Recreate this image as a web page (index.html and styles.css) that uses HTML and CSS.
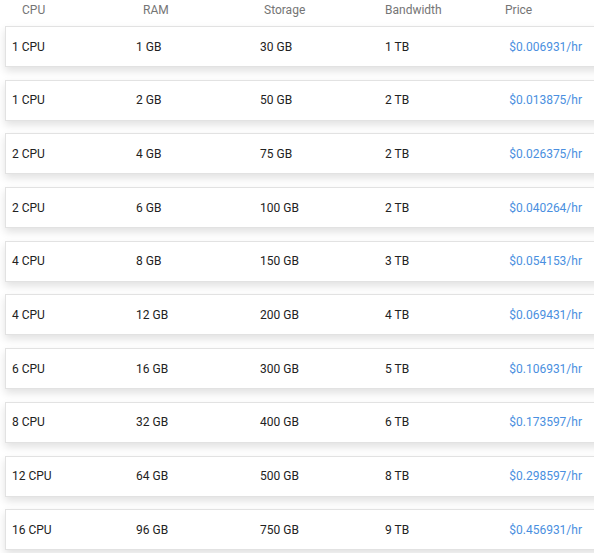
FILE: index.html
```html
<!DOCTYPE html>
<html>
<head>
<meta charset="utf-8">
<link rel="stylesheet" href="styles.css">
</head>
<body>
<div class="plans">
  <div class="head">
    <span>CPU</span><span>RAM</span><span>Storage</span><span>Bandwidth</span><span>Price</span>
  </div>
  <div class="row"><span>1 CPU</span><span>1 GB</span><span>30 GB</span><span>1 TB</span><span class="price">$0.006931/hr</span></div>
  <div class="row"><span>1 CPU</span><span>2 GB</span><span>50 GB</span><span>2 TB</span><span class="price">$0.013875/hr</span></div>
  <div class="row"><span>2 CPU</span><span>4 GB</span><span>75 GB</span><span>2 TB</span><span class="price">$0.026375/hr</span></div>
  <div class="row"><span>2 CPU</span><span>6 GB</span><span>100 GB</span><span>2 TB</span><span class="price">$0.040264/hr</span></div>
  <div class="row"><span>4 CPU</span><span>8 GB</span><span>150 GB</span><span>3 TB</span><span class="price">$0.054153/hr</span></div>
  <div class="row"><span>4 CPU</span><span>12 GB</span><span>200 GB</span><span>4 TB</span><span class="price">$0.069431/hr</span></div>
  <div class="row"><span>6 CPU</span><span>16 GB</span><span>300 GB</span><span>5 TB</span><span class="price">$0.106931/hr</span></div>
  <div class="row"><span>8 CPU</span><span>32 GB</span><span>400 GB</span><span>6 TB</span><span class="price">$0.173597/hr</span></div>
  <div class="row"><span>12 CPU</span><span>64 GB</span><span>500 GB</span><span>8 TB</span><span class="price">$0.298597/hr</span></div>
  <div class="row"><span>16 CPU</span><span>96 GB</span><span>750 GB</span><span>9 TB</span><span class="price">$0.456931/hr</span></div>
</div>
</body>
</html>
```
FILE: styles.css
```css
html, body {
  margin: 0;
  padding: 0;
  background: #fff;
  overflow: hidden;
}
body {
  font-family: Roboto, "Liberation Sans", sans-serif;
  font-size: 12px;
}
.plans {
  padding-left: 5px;
  width: 620px;
}
.head {
  display: grid;
  grid-template-columns: 121px 121px 121px 120px 100px;
  padding-left: 17px;
  height: 20px;
  align-items: center;
  color: #757575;
  margin-bottom: 6px;
}
.row {
  display: grid;
  grid-template-columns: 124px 124px 125px 80px 117px;
  align-items: center;
  height: 39px;
  padding-left: 6px;
  border: 1px solid #e2e2e2;
  background: #fff;
  box-shadow: 0 4px 8px rgba(0, 0, 0, 0.12);
  margin-bottom: 12.7px;
  color: #222;
}
.price {
  color: #4a8fe0;
  text-align: right;
}
```
